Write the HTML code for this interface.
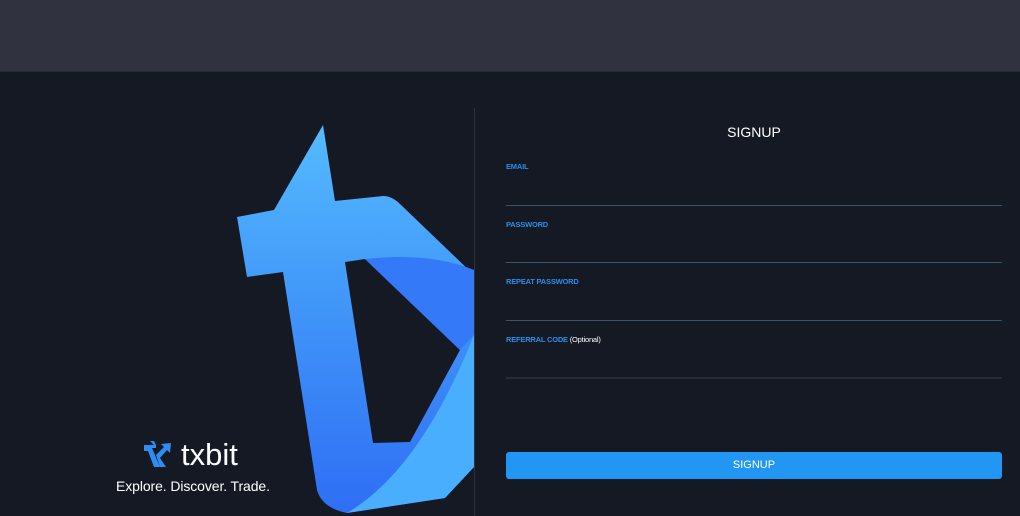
<!DOCTYPE html>
<html><head><meta charset="utf-8"><style>
*{margin:0;padding:0;box-sizing:border-box}
body{width:1020px;height:516px;background:#141923;position:relative;overflow:hidden;font-family:"Liberation Sans",sans-serif}
.hdr{position:absolute;left:0;top:0;width:1020px;height:72px;background:#30333f;border-bottom:1px solid #262a35}
.div{position:absolute;left:474px;top:108px;width:1px;height:408px;background:#2e3340}
.title{position:absolute;left:506px;width:496px;top:124px;text-align:center;color:#fff;font-size:14px}
.lbl{position:absolute;left:506px;font-size:7.5px;font-weight:bold;color:#2b8de8;letter-spacing:-0.2px}
.lbl span{color:#fff;font-weight:normal}
.ln{position:absolute;left:506px;width:496px;height:1px;background:#3a5366}
.btn{position:absolute;left:506px;top:452px;width:496px;height:27px;background:#2196f3;border-radius:3px;color:#fff;font-size:11px;text-align:center;line-height:27px}
.brand{position:absolute;left:181px;top:437px;color:#fff;font-size:31px;font-weight:normal;letter-spacing:0px}
.tag{position:absolute;left:116px;top:478px;color:#fff;font-size:14px;letter-spacing:-0.1px}
</style></head><body>
<div class="hdr"></div>
<svg style="position:absolute;left:0;top:0" width="480" height="516">
<defs>
<linearGradient id="g" x1="0" y1="0" x2="0" y2="1">
<stop offset="0" stop-color="#55bbff"/><stop offset="0.5" stop-color="#3f93f8"/><stop offset="1" stop-color="#2f6ef5"/>
</linearGradient>
</defs>
<path fill-rule="evenodd" fill="url(#g)" d="M323 125 L335 201 L383 196 Q392 196 400 204 L474 275 L474 467 L445 498 L347 513 Q322 508 317 490 L283 272 L247 277 L237 217 L274 210 Z M345 262 L373 443 L410 442 L460 350 L365 259 Z"/>
<path fill="#3479f8" d="M365 259 Q430 252 474 270 L474 335 L460 350 Z"/>
<path fill="#4aaeff" d="M474 335 L474 467 L445 498 L347 513 Q420 470 474 335 Z"/>
<g transform="translate(142,441)" fill="#2f8cf2">
<path d="M2 4 L12 4 L8 0 L12 0 L14 4 L14 7 L10 7 L18 26 L12 26 L6 10 L2 10 Z"/>
<path d="M14 14 L22 6 L19 3 L29 2 L28 12 L25 9 L18 17 L24 26 L18 26 Z"/>
</g>
</svg>
<div class="brand">txbit</div>
<div class="tag">Explore. Discover. Trade.</div>
<div class="div"></div>
<div class="title">SIGNUP</div>
<div class="lbl" style="top:162px">EMAIL</div>
<div class="ln" style="top:205px"></div>
<div class="lbl" style="top:220px">PASSWORD</div>
<div class="ln" style="top:262px"></div>
<div class="lbl" style="top:277px">REPEAT PASSWORD</div>
<div class="ln" style="top:320px"></div>
<div class="lbl" style="top:335px">REFERRAL CODE <span>(Optional)</span></div>
<div class="ln" style="top:377px;height:2px;background:#252b38"></div>
<div class="btn">SIGNUP</div>
</body></html>
